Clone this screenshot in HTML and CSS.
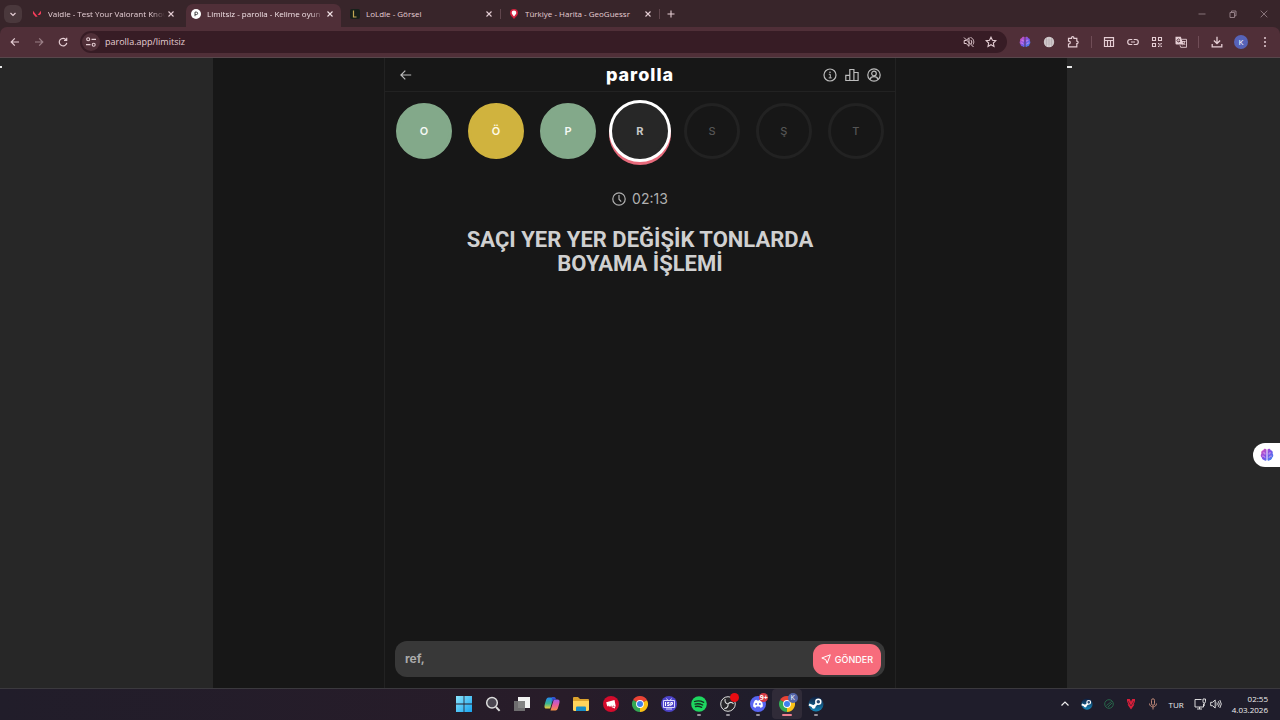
FILE: index.html
```html
<!DOCTYPE html>
<html lang="tr">
<head>
<meta charset="utf-8">
<title>Limitsiz - parolla - Kelime oyunu</title>
<link rel="stylesheet" href="styles.css">
</head>
<body>
<svg class="defs" aria-hidden="true">
  <defs>
    <linearGradient id="brainFill" x1="0" y1="0" x2="1" y2="1"><stop offset="0" stop-color="#e453b4"/><stop offset=".5" stop-color="#7951e8"/><stop offset="1" stop-color="#3792f0"/></linearGradient>
    <linearGradient id="winFill" x1="0" y1="0" x2="1" y2="1"><stop offset="0" stop-color="#8be5fd"/><stop offset="1" stop-color="#18a4ef"/></linearGradient>
    <linearGradient id="steamFill" x1="0" y1="0" x2="0" y2="1"><stop offset="0" stop-color="#101c3c"/><stop offset="1" stop-color="#1586b8"/></linearGradient>
    <linearGradient id="copA" x1="0" y1="0" x2="0" y2="1"><stop offset="0" stop-color="#2388ef"/><stop offset=".55" stop-color="#39b690"/><stop offset="1" stop-color="#f0cd3c"/></linearGradient>
    <linearGradient id="copB" x1="0" y1="0" x2="0" y2="1"><stop offset="0" stop-color="#a25be8"/><stop offset=".5" stop-color="#ea5b9c"/><stop offset="1" stop-color="#f69145"/></linearGradient>
    <symbol id="x" viewBox="0 0 10 10"><path d="M2.500 2.500l5 5M7.500 2.500l-5 5" fill="none" stroke="currentColor" stroke-width="1.100"/></symbol>
    <symbol id="brain" viewBox="0 0 12 12"><path d="M5.600 1.200C4.200.2 3 1 2.800 2 1.400 2.300.7 3.600 1.200 4.800.3 5.900.5 7.500 1.500 8.200 1.600 9.800 2.800 10.300 3.600 10.200 4.300 11.300 5.300 11 5.600 10.500zM6.400 1.200C7.800.2 9 1 9.200 2 10.600 2.300 11.300 3.600 10.800 4.800 11.700 5.900 11.500 7.500 10.500 8.200 10.400 9.800 9.200 10.300 8.400 10.200 7.700 11.300 6.700 11 6.400 10.500z" fill="url(#brainFill)"/><path d="M2.500 4.200h1.700v1.500M1.800 7h1.700l.8 1.500M9.500 4.200H7.800v1.500M10.200 7H8.500l-.8 1.500" fill="none" stroke="#efa9ef" stroke-width=".6"/></symbol>
    <symbol id="steam" viewBox="0 0 16 16"><circle cx="8" cy="8" r="7.500" fill="url(#steamFill)"/><path d="M1 8.500l4.800 2L9.500 7" fill="none" stroke="#fff" stroke-width="2.400"/><circle cx="10.300" cy="5.800" r="2.500" fill="#27496f" stroke="#fff" stroke-width="1.500"/><circle cx="5.600" cy="10.800" r="1.900" fill="#fff"/></symbol>
    <symbol id="chrome" viewBox="0 0 16 16"><path d="M8 8L1.070 4A8 8 0 0 1 14.930 4z" fill="#ea4335"/><path d="M8 8L14.930 4A8 8 0 0 1 8 16z" fill="#fbc116"/><path d="M8 8v8A8 8 0 0 1 1.070 4z" fill="#34a853"/><path d="M8 4.200h6.900a8 8 0 0 1 .2 .5H8z" fill="#ea4335"/><circle cx="8" cy="8" r="3.900" fill="#fff"/><circle cx="8" cy="8" r="3" fill="#3f80ee"/></symbol>
  </defs>
</svg>

<header class="browser">
  <div class="tabstrip">
    <button class="tab-search" aria-label="Sekmelerde ara"><svg viewBox="0 0 10 10" class="i10"><path d="M2.500 4l2.500 2.500L7.500 4" fill="none" stroke="currentColor" stroke-width="1.200"/></svg></button>
    <nav class="tabs" aria-label="Sekmeler">
      <div class="tab">
        <svg viewBox="0 0 10 10" class="i10"><path d="M1 1.800l4.700 6H3.500L1 4.700zM9 1.800v2.900L7.800 6H5.600z" fill="#f23d5a"/></svg>
        <span class="tab-title fade">Valdle - Test Your Valorant Know</span>
        <button class="close" aria-label="Kapat"><svg class="i10"><use href="#x"/></svg></button>
      </div>
      <div class="tab active">
        <svg viewBox="0 0 10 10" class="i10"><circle cx="5" cy="5" r="5" fill="#fff"/><path d="M4 7.200V3.100h1.400a1.200 1.200 0 0 1 0 2.500H4" fill="none" stroke="#444" stroke-width="1"/></svg>
        <span class="tab-title fade">Limitsiz - parolla - Kelime oyun</span>
        <button class="close" aria-label="Kapat"><svg class="i10"><use href="#x"/></svg></button>
      </div>
      <div class="tab divided">
        <svg viewBox="0 0 10 10" class="i10"><rect width="10" height="10" rx="2" fill="#17201a"/><path d="M3.500 1.500v6.500h3" fill="none" stroke="#c2a853" stroke-width="1.200"/></svg>
        <span class="tab-title">LoLdle - Görsel</span>
        <button class="close" aria-label="Kapat"><svg class="i10"><use href="#x"/></svg></button>
      </div>
      <div class="tab divided">
        <svg viewBox="0 0 10 10" class="i10"><path d="M5 0a4 4 0 0 1 4 4c0 2.500-2.500 4-4 6-1.500-2-4-3.500-4-6a4 4 0 0 1 4-4z" fill="#d2233e"/><path d="M5 1.500a2.300 2.300 0 0 1 2.300 2.300C7.300 5.300 6 6 5 7.500 4 6 2.700 5.300 2.700 3.800A2.300 2.300 0 0 1 5 1.500z" fill="#fff"/></svg>
        <span class="tab-title">Türkiye - Harita - GeoGuessr</span>
        <button class="close" aria-label="Kapat"><svg class="i10"><use href="#x"/></svg></button>
      </div>
    </nav>
    <button class="new-tab" aria-label="Yeni sekme"><svg viewBox="0 0 10 10" class="i10"><path d="M5 1.500v7M1.500 5h7" stroke="currentColor" stroke-width="1.100"/></svg></button>
    <div class="window-controls">
      <button aria-label="Simge durumuna küçült"><svg viewBox="0 0 10 10" class="i10"><path d="M1.500 5h7" stroke="currentColor" stroke-width=".8"/></svg></button>
      <button aria-label="Önceki boyut"><svg viewBox="0 0 10 10" class="i10"><path d="M2 3.500h4.500v5H2zM3.500 3.500V2H8v4.800H6.500" fill="none" stroke="currentColor" stroke-width=".9"/></svg></button>
      <button aria-label="Pencereyi kapat"><svg viewBox="0 0 10 10" class="i10"><path d="M1.700 1.700l6.600 6.600M8.300 1.700L1.700 8.300" stroke="currentColor" stroke-width=".8"/></svg></button>
    </div>
  </div>

  <div class="toolbar">
    <button class="tool" aria-label="Geri"><svg viewBox="0 0 12 12" class="i12"><path d="M10 6H2.300M5.800 2.300L2.200 6l3.600 3.700" fill="none" stroke="currentColor" stroke-width="1.200"/></svg></button>
    <button class="tool dim" aria-label="İleri"><svg viewBox="0 0 12 12" class="i12"><path d="M2 6h7.700M6.200 2.300L9.800 6 6.200 9.700" fill="none" stroke="currentColor" stroke-width="1.200"/></svg></button>
    <button class="tool" aria-label="Yenile"><svg viewBox="0 0 12 12" class="i12"><path d="M9.200 4A3.800 3.800 0 1 0 9.800 6.800M9.700 1.800v2.700H7" fill="none" stroke="currentColor" stroke-width="1.200"/></svg></button>
    <div class="omnibox">
      <button class="site-info" aria-label="Site bilgileri"><svg viewBox="0 0 12 12" class="i12"><path d="M6.500 3.300H11M1 8.700h4.500" stroke="currentColor" stroke-width="1.200"/><g fill="none" stroke="currentColor" stroke-width="1.100"><circle cx="3.200" cy="3.300" r="1.500"/><circle cx="8.700" cy="8.700" r="1.500"/></g></svg></button>
      <input class="url" type="text" aria-label="Adres çubuğu" value="parolla.app/limitsiz">
      <button class="tool" aria-label="Sesi kapat"><svg viewBox="0 0 12 12" class="i12"><path d="M1.200 4.500h2l2.800-2.800v8.600L3.200 7.500h-2zM7.800 4c1.300 1 1.300 3 .2 4M7.500 1.500c3 .8 4.200 4.500 2.500 7M1 1.500l9.500 9.500" fill="none" stroke="currentColor" stroke-width="1"/></svg></button>
      <button class="tool" aria-label="Yer işareti ekle"><svg viewBox="0 0 12 12" class="i12"><path d="M6 1.200l1.450 3.100 3.350.4-2.450 2.300.65 3.400-3-1.700-3 1.700.65-3.400L1.200 4.700l3.350-.4z" fill="none" stroke="currentColor" stroke-width="1.100"/></svg></button>
    </div>
    <div class="extensions">
      <button class="tool" aria-label="Beyin uzantısı"><svg class="i12"><use href="#brain"/></svg></button>
      <button class="tool" aria-label="Dil uzantısı"><svg viewBox="0 0 12 12" class="i12"><circle cx="6" cy="6" r="5.200" fill="#d8d1d3"/><path d="M1 4h10M1 8h10M6 1v10M3.500 1.500v9M8.500 1.500v9M1 6h10" fill="none" stroke="#9f9699" stroke-width=".4"/></svg></button>
      <button class="tool" aria-label="Uzantılar"><svg viewBox="0 0 12 12" class="i12"><path d="M1.500 2.300h3V1.800a1.200 1.200 0 0 1 2.400 0v.5h2.900v2.800h.4a1.300 1.300 0 0 1 0 2.500h-.4v3.200H1.500V8h.4a1.400 1.400 0 0 0 0-2.800h-.4z" fill="none" stroke="currentColor" stroke-width="1.200"/></svg></button>
    </div>
    <div class="extensions shortcuts">
      <button class="tool" aria-label="Okuma modu"><svg viewBox="0 0 12 12" class="i12"><path d="M1.500 1.700h9v8.800h-9zM1.500 4.500h9M4.500 4.500v6M7.500 4.500v6" fill="none" stroke="currentColor" stroke-width="1.200"/></svg></button>
      <button class="tool" aria-label="Bağlantıyı kopyala"><svg viewBox="0 0 12 12" class="i12"><path d="M5.300 3.500H3.200a2.500 2.500 0 0 0 0 5h2.100M6.700 3.500h2.100a2.500 2.500 0 0 1 0 5H6.700M4 6h4" fill="none" stroke="currentColor" stroke-width="1.200"/></svg></button>
      <button class="tool" aria-label="QR kodu"><svg viewBox="0 0 12 12" class="i12"><path d="M1.500 1.500h3v3h-3zM7.500 1.500h3v3h-3zM1.500 7.500h3v3h-3z" fill="none" stroke="currentColor" stroke-width="1.100"/><path d="M7 7h1.300v1.300H7zM9.500 7h1.300v1.300H9.500zM8.200 8.300h1.300v1.300H8.200zM7 9.700h1.300V11H7zM9.600 9.700h1.300V11H9.600z" fill="currentColor"/></svg></button>
      <button class="tool" aria-label="Çevir"><svg viewBox="0 0 12 12" class="i12"><path d="M.5.800h5.300L8.500 8.500H1.500a1 1 0 0 1-1-1z" fill="currentColor"/><path d="M6.500 3.300h5v8H5.700l-.7-2M7 5.500h3.500M9.700 5.500C9.500 7.500 8.500 8.500 7.500 9M8 6.500l2.200 2.500" fill="none" stroke="currentColor" stroke-width=".9"/><path d="M4.800 3.600A1.500 1.500 0 1 0 5 5H3.700" fill="none" stroke="#502f38" stroke-width=".9"/></svg></button>
    </div>
    <div class="extensions account">
      <button class="tool" aria-label="İndirilenler"><svg viewBox="0 0 12 12" class="i12"><path d="M6 .8v6.500M2.900 4.500L6 7.500l3.100-3M1.200 8v2.800h9.600V8" fill="none" stroke="currentColor" stroke-width="1.300"/></svg></button>
      <button class="avatar" aria-label="Profil">K</button>
      <button class="tool" aria-label="Menü"><svg viewBox="0 0 12 12" class="i12"><g fill="currentColor"><circle cx="6" cy="2" r="1"/><circle cx="6" cy="6" r="1"/><circle cx="6" cy="10" r="1"/></g></svg></button>
    </div>
  </div>
</header>

<div class="page">
  <aside class="gutter"><i class="ad-mark small"></i></aside>
  <main class="stage">
    <section class="game">
      <header class="game-header">
        <button class="icon-btn" aria-label="Geri dön"><svg viewBox="0 0 14 14" class="i14"><path d="M12.200 7H2M6.300 2.600L1.900 7l4.400 4.400" fill="none" stroke="currentColor" stroke-width="1.200"/></svg></button>
        <h1 class="logo">parolla</h1>
        <div class="actions">
          <button class="icon-btn" aria-label="Bilgi"><svg viewBox="0 0 14 14" class="i14"><circle cx="7" cy="7" r="6" fill="none" stroke="currentColor" stroke-width="1.200"/><path d="M5.800 6.300h1.500v3.500M5.700 9.900h3" fill="none" stroke="currentColor"/><circle cx="7" cy="4.200" r=".8" fill="currentColor"/></svg></button>
          <button class="icon-btn" aria-label="İstatistikler"><svg viewBox="0 0 14 14" class="i14"><path d="M.8 12.500V7.300h4v5.200zM4.800 12.500V1.500h4.100v11M8.900 4.500h4.200v8H4.800" fill="none" stroke="currentColor" stroke-width="1.200"/></svg></button>
          <button class="icon-btn" aria-label="Hesap"><svg viewBox="0 0 14 14" class="i14"><g fill="none" stroke="currentColor" stroke-width="1.200"><circle cx="7" cy="7" r="6.200"/><circle cx="7" cy="5.500" r="2.300"/><path d="M3 11.500c.5-2 2-2.800 4-2.800s3.500.8 4 2.800"/></g></svg></button>
        </div>
      </header>
      <ol class="letters">
        <li class="letter correct">O</li>
        <li class="letter passed">Ö</li>
        <li class="letter correct">P</li>
        <li class="letter current">R</li>
        <li class="letter">S</li>
        <li class="letter">Ş</li>
        <li class="letter">T</li>
      </ol>
      <div class="timer"><svg viewBox="0 0 14 14" class="i14"><circle cx="7" cy="7" r="6.200" fill="none" stroke="currentColor" stroke-width="1.200"/><path d="M7 3v4.200l2.200 2.500" fill="none" stroke="currentColor" stroke-width="1.200"/></svg><time>02:13</time></div>
      <h2 class="question">SAÇI YER YER DEĞİŞİK TONLARDA BOYAMA İŞLEMİ</h2>
      <form class="answer">
        <input class="answer-input" type="text" aria-label="Cevap" value="ref,">
        <button class="send" type="button"><svg viewBox="0 0 10 10" class="i10"><path d="M9.300.8L6.200 9.300 4.700 5.600.8 4z" fill="none" stroke="currentColor" stroke-linejoin="round"/></svg>GÖNDER</button>
      </form>
    </section>
  </main>
  <aside class="gutter"><i class="ad-mark"></i></aside>
  <button class="side-tab" aria-label="Yan panel"><svg class="i14"><use href="#brain"/></svg></button>
</div>

<footer class="taskbar">
  <nav class="apps" aria-label="Uygulamalar">
    <button class="app" aria-label="Başlat"><svg viewBox="0 0 16 16" class="i16"><path d="M0 0h7.600v7.600H0zM8.400 0H16v7.600H8.400zM0 8.400h7.600V16H0zM8.400 8.400H16V16H8.400z" fill="url(#winFill)"/></svg></button>
    <button class="app" aria-label="Ara"><svg viewBox="0 0 16 16" class="i16"><circle cx="7" cy="6.800" r="5.300" fill="#4b4651" stroke="#ddd" stroke-width="1.500"/><path d="M11 11l3.600 3.800" stroke="#ddd" stroke-width="1.900"/></svg></button>
    <button class="app" aria-label="Görev görünümü"><svg viewBox="0 0 16 16" class="i16"><path d="M4 1h12v11H4z" fill="#f2f2f2"/><path d="M0 5h11v10H0z" fill="#777" opacity=".9"/></svg></button>
    <button class="app" aria-label="Copilot"><svg viewBox="0 0 16 16" class="i16"><path d="M4.500 1.500h5L6.200 12.500H2.500C-.2 12.500.3 10 1 7.500l1.200-4Q2.800 1.500 4.500 1.500z" fill="url(#copA)"/><path d="M9.800 3.500h3.700c2.700 0 2.200 2.500 1.500 5l-1.200 4q-.6 2-2.300 2h-5z" fill="url(#copB)"/><path d="M8 1h2.200q1.300 0 1.600 1.500l.3 1H10q-1.200 0-1.700 1.500L7.500 8z" fill="#3153d4"/></svg></button>
    <button class="app" aria-label="Dosya Gezgini"><svg viewBox="0 0 16 16" class="i16"><path d="M0 2q0-1 1-1h4l2 2h8q1 0 1 1v4H0z" fill="#dba22d"/><path d="M0 5h16v8.500q0 1.500-1.500 1.500h-13Q0 15 0 13.500z" fill="#ffd45c"/><path d="M3 11.500q0-1 1-1h8q1 0 1 1V15H3z" fill="#168cc6"/></svg></button>
    <button class="app" aria-label="Riot"><svg viewBox="0 0 16 16" class="i16"><circle cx="8" cy="8" r="8" fill="#d40b2c"/><path d="M3.200 6.200L11.500 4l1.300 6.500-2.300.2-.3-2-.4 2H8.500L8 8.700l-.1 1.800H6.200l-.6-1.700.2 1.500H4.200zM8.300 11.300l3.800-.2-.2 1.300z" fill="#fff"/></svg></button>
    <button class="app" aria-label="Chrome"><svg class="i16"><use href="#chrome"/></svg></button>
    <button class="app" aria-label="ISP"><svg viewBox="0 0 16 16" class="i16"><circle cx="8" cy="8" r="8" fill="#4d43c9"/><path d="M2.500 4.500h11v7h-11zM5.500 2.500l1.500 2M10.500 2.500l-1.500 2M5 13h6" fill="none" stroke="#e9e8ff" stroke-width=".9"/><path d="M4.500 6v4M8.400 6.500H6.400v1.400h1.800v1.600H6.200M9.800 10V6.500h1.700v1.800H9.800" fill="none" stroke="#fff"/></svg></button>
    <button class="app running" aria-label="Spotify"><svg viewBox="0 0 16 16" class="i16"><circle cx="8" cy="8" r="7.800" fill="#1ed760"/><path d="M3.500 5.500c3-1 6.300-.7 9.200.8M4 8.100c2.600-.7 5.200-.4 7.700.9M4.500 10.500c2.200-.5 4.200-.2 6.200.8" fill="none" stroke="#153120" stroke-width="1.300" stroke-linecap="round"/></svg></button>
    <button class="app running" aria-label="OBS"><svg viewBox="0 0 16 16" class="i16"><circle cx="8" cy="8" r="7.300" fill="#272529" stroke="#ddd"/><path d="M8 8C5.500 7.500 4.500 5.500 5.200 3M8 8c1.500-2 4-2.200 5.500-.2M8 8c.5 2.500-1 4.500-3.700 4.500" fill="none" stroke="#ddd" stroke-width="1.100"/></svg><i class="badge dot"></i></button>
    <button class="app running" aria-label="Discord"><svg viewBox="0 0 16 16" class="i16"><circle cx="8" cy="8" r="8" fill="#5865f2"/><path d="M5 4.200l1.500-.5.500.8h2l.5-.8 1.500.5c1.400 1.800 2 3.800 1.800 6.200-.9.800-1.800 1.200-2.500 1.300l-.7-1.200H6.400l-.7 1.200c-.7-.1-1.600-.5-2.500-1.300C3 8 3.600 6 5 4.200z" fill="#fff"/><circle cx="6.100" cy="8" r="1" fill="#5865f2"/><circle cx="9.900" cy="8" r="1" fill="#5865f2"/></svg><b class="badge count">9+</b></button>
    <button class="app running selected" aria-label="Chrome, K profili"><svg class="i16"><use href="#chrome"/></svg><b class="badge profile">K</b></button>
    <button class="app running" aria-label="Steam"><svg class="i16"><use href="#steam"/></svg></button>
  </nav>
  <div class="tray">
    <button aria-label="Gizli simgeler"><svg viewBox="0 0 12 12" class="i12"><path d="M2.500 7.500L6 4l3.500 3.500" fill="none" stroke="#eee" stroke-width="1.200"/></svg></button>
    <button aria-label="Steam"><svg class="i12"><use href="#steam"/></svg></button>
    <button aria-label="Koruma"><svg viewBox="0 0 12 12" class="i12"><g fill="none" stroke="#27674a"><circle cx="6" cy="6" r="4.300"/><path d="M3.500 7.500l5-4M5 9l4-4"/></g></svg></button>
    <button aria-label="Vanguard"><svg viewBox="0 0 12 12" class="i12"><path d="M2 1h2.800L6 3.800 7.200 1H10v2.500L8.500 6.500 9.500 6.500 6 11.500 2.500 6.500h1L2 3.500z" fill="#d81f3b"/><path d="M3 3l3 5 3-5" fill="none" stroke="#45202f" stroke-width=".7"/></svg></button>
    <button aria-label="Mikrofon"><svg viewBox="0 0 12 12" class="i12"><g fill="none" stroke="#bd8676"><rect x="4.500" y=".8" width="3" height="6.500" rx="1.500"/><path d="M2.500 5.500c0 4.500 7 4.500 7 0M6 9v2.500"/></g></svg></button>
    <span class="lang">TUR</span>
    <div class="system">
      <button aria-label="Ağ"><svg viewBox="0 0 12 12" class="i12"><path d="M7.500 1.500H1v7.500h8.500V6M3 11h5M5.500 9v2M9 1h2.500v2.500Q11.500 5 10.200 5T9 3.500zM10.200 5v3" fill="none" stroke="#eee" stroke-width=".9"/></svg></button>
      <button aria-label="Ses"><svg viewBox="0 0 12 12" class="i12"><path d="M.7 4.300h1.800L5.200 2v8L2.500 7.700H.7zM6.800 4.500q1 1.500 0 3M8.300 3.200q2 2.800 0 5.600M9.800 2q3 4 0 8" fill="none" stroke="#eee" stroke-width=".9"/></svg></button>
    </div>
    <time class="clock">02:55<br>4.03.2026</time>
  </div>
</footer>
</body>
</html>
```
FILE: styles.css
```css
* { box-sizing: border-box; }

body {
  margin: 0;
  min-height: 100vh;
  display: flex;
  flex-direction: column;
  background: #171717;
  color: #d0d0d0;
  font-family: "Open Sans", "Noto Sans", sans-serif;
  font-size: 8px;
}

button {
  display: inline-flex;
  align-items: center;
  justify-content: center;
  flex: none;
  margin: 0;
  padding: 0;
  border: 0;
  background: none;
  color: inherit;
  font: inherit;
}

input {
  min-width: 0;
  padding: 0;
  border: 0;
  outline: 0;
  background: none;
  color: inherit;
  font: inherit;
}

svg { display: block; flex: none; }
.defs { position: absolute; width: 0; height: 0; }
.i10 { width: 10px; height: 10px; }
.i12 { width: 12px; height: 12px; }
.i14 { width: 14px; height: 14px; }
.i16 { width: 16px; height: 16px; }

/* Browser window */
.browser { background: #38252a; color: #e5ced4; }

.tabstrip {
  display: flex;
  align-items: center;
  height: 27px;
  padding-left: 4px;
}

.tab-search {
  width: 18px;
  height: 18px;
  border-radius: 6px;
  background: #4a383c;
}

.tabs { display: flex; gap: 4px; align-self: stretch; margin-left: 5px; padding-top: 4px; }

.tab {
  position: relative;
  display: flex;
  align-items: center;
  gap: 6px;
  width: 155px;
  padding: 0 6px 4px 5px;
}

.tab.active {
  border-radius: 7px 7px 0 0;
  background: #502f38;
  color: #f3e3e7;
}

.tab.divided::after {
  content: "";
  position: absolute;
  right: -1px;
  top: 5px;
  width: 1px;
  height: 10px;
  background: #5f454c;
}

.tab-title { flex: 1; overflow: hidden; white-space: nowrap; line-height: 14px; }
.fade { margin-right: -5px; mask-image: linear-gradient(to right, #000 88%, transparent); }
.new-tab { margin-left: 7px; }

.window-controls { display: flex; gap: 21px; margin-left: auto; padding-right: 11px; color: #9c888e; }

.toolbar {
  display: flex;
  align-items: center;
  gap: 12px;
  height: 31px;
  padding: 0 9px;
  border-bottom: 1px solid #58474c;
  border-radius: 7px 7px 0 0;
  background: #502f38;
}

.dim { opacity: .5; }

.omnibox {
  display: flex;
  flex: 1;
  align-items: center;
  gap: 10px;
  height: 22px;
  margin-left: -1px;
  padding: 0 10px 0 2px;
  border-radius: 11px;
  background: #371c25;
}

.site-info { width: 18px; height: 18px; border-radius: 50%; background: #502f38; }
.url { flex: 1; margin-left: -5px; font-size: 9px; line-height: 16px; }

.extensions { display: flex; align-items: center; gap: 12px; }
.shortcuts { padding: 0 11px; border-left: 1px solid #704d57; border-right: 1px solid #704d57; }
.avatar { width: 14px; height: 14px; border-radius: 50%; background: #5663b8; color: #fff; font-size: 8px; line-height: 14px; }
.account { gap: 11px; }

/* Game */
.page {
  position: relative;
  display: grid;
  grid-template-columns: 1fr 4fr 1fr;
  flex: 1;
  background: #272727;
}

.gutter { padding-top: 8px; }
.ad-mark { display: block; width: 5px; height: 2px; background: #e8e8e8; }
.ad-mark.small { width: 2px; }

.stage { display: flex; justify-content: center; background: #171717; }

.game {
  display: flex;
  flex-direction: column;
  width: 60%;
  border: 1px solid #222;
  border-width: 0 1px;
  font-family: Inter, Roboto, sans-serif;
}

.game-header {
  display: grid;
  grid-template-columns: 1fr auto 1fr;
  align-items: center;
  height: 34px;
  padding: 0 14px;
  border-bottom: 1px solid #222;
}

.game-header > .icon-btn { justify-self: start; }
.icon-btn { color: #bcbcbc; }
.logo { margin: 0; color: #fff; font-size: 18px; line-height: 20px; font-weight: 800; letter-spacing: 1px; }
.actions { display: flex; justify-content: flex-end; gap: 8px; }

.letters {
  display: flex;
  justify-content: space-between;
  margin: 0;
  padding: 11px 11px 0;
  list-style: none;
}

.letter {
  display: flex;
  align-items: center;
  justify-content: center;
  width: 56px;
  height: 56px;
  border: 3px solid #222;
  border-radius: 50%;
  color: #555;
  font-size: 11px;
  font-weight: 500;
}

.correct { border-color: #83a98a; background: #83a98a; color: #f4f8f4; font-weight: 600; }
.passed { border-color: #d0b33e; background: #d0b33e; color: #fffbe8; font-weight: 600; }
.current {
  border-color: #272727;
  background: #272727;
  box-shadow: 0 0 0 3px #fff, 0 3px 0 3px #e66a7b;
  color: #c8c8c8;
  font-weight: 700;
}

.timer {
  display: flex;
  align-items: center;
  justify-content: center;
  gap: 6px;
  margin-top: 32px;
  color: #b0b0b0;
  font-size: 14px;
  line-height: 16px;
}

.question {
  align-self: center;
  max-width: 380px;
  margin: 21px 0 0;
  color: #d0d0d0;
  font-family: Roboto, Inter, sans-serif;
  font-size: 22px;
  line-height: 24px;
  font-weight: 700;
  text-align: center;
}

.answer {
  display: flex;
  align-items: center;
  height: 36px;
  margin: auto 10px 11px;
  padding: 0 4px 0 10px;
  border-radius: 12px;
  background: #383838;
}

.answer-input { flex: 1; color: #aaa; font-size: 12px; font-weight: 700; line-height: 20px; }

.send {
  gap: 4px;
  height: 31px;
  padding: 0 8px;
  border-radius: 11px;
  background: #f76c7c;
  color: #fff;
  font-size: 9px;
  font-weight: 500;
}

.side-tab {
  position: absolute;
  right: 0;
  top: 385px;
  width: 27px;
  height: 24px;
  border-radius: 12px 0 0 12px;
  background: #fff;
}

/* Taskbar */
.taskbar {
  display: grid;
  grid-template-columns: 1fr 382px 1fr;
  height: 32px;
  padding-bottom: 1px;
  border-top: 1px solid #3b393e;
  background: linear-gradient(90deg, #211d2a, #281c29 44%, #1f1d2b 60%, #1f1d2b);
  color: #eee;
}

.apps { display: flex; grid-column: 2; }
.app { position: relative; flex: 1; }
.running::after {
  content: "";
  position: absolute;
  bottom: 3px;
  width: 4px;
  height: 2px;
  border-radius: 1px;
  background: #96929b;
}
.selected { border-radius: 4px; background: #302b38; }
.selected::after { width: 10px; background: #ed8191; }

.badge {
  position: absolute;
  right: 4px;
  top: 4px;
  min-width: 9px;
  height: 9px;
  border-radius: 5px;
  color: #fff;
  font-size: 7px;
  line-height: 9px;
  text-align: center;
}
.dot { background: #e90c12; }
.count { background: #d63a46; }
.profile { min-width: 10px; height: 10px; background: #5465a8; line-height: 10px; font-weight: 400; }

.tray { display: flex; align-items: center; justify-content: flex-end; gap: 10px; padding-right: 12px; }
.system { display: flex; gap: 4px; }
.clock { line-height: 11px; text-align: right; }
```
